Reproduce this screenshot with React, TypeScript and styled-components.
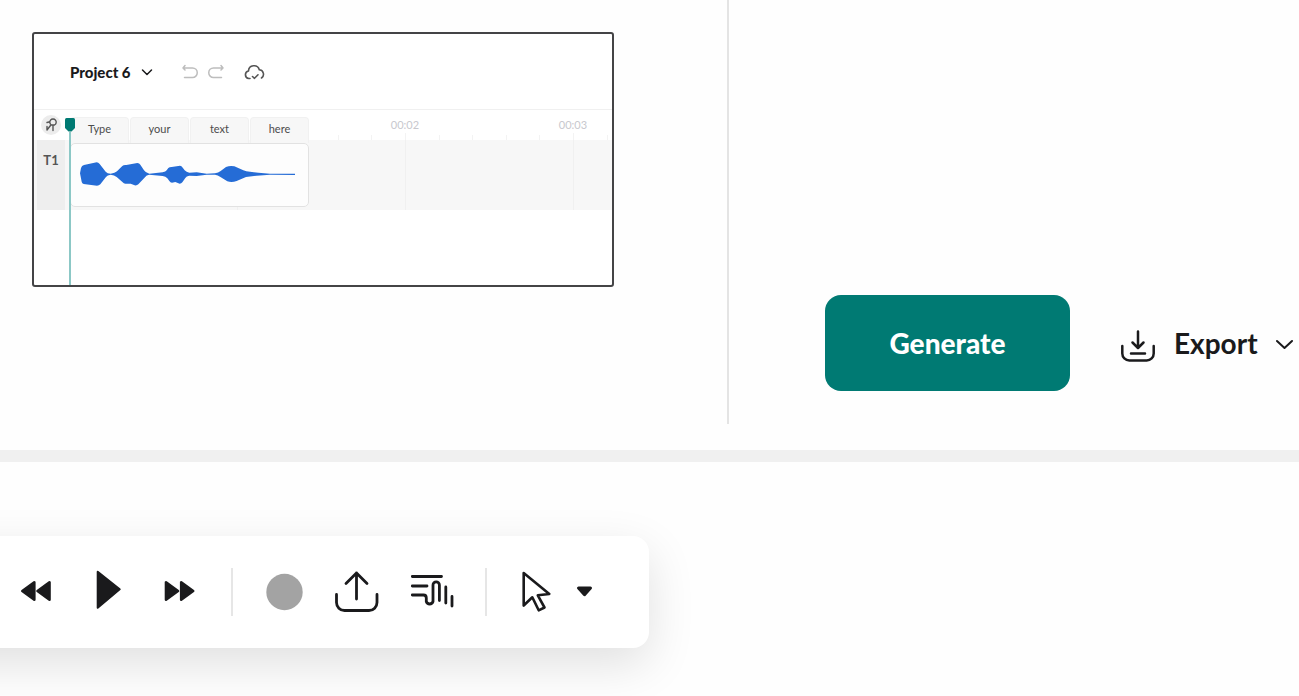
import React from "react";
import styled, { createGlobalStyle } from "styled-components";

const GlobalStyle = createGlobalStyle`
  *, *::before, *::after { box-sizing: border-box; }
  body {
    margin: 0;
    background: #fefefe;
    color: #1a1a1c;
    font-family: Lato, "Open Sans", "Liberation Sans", sans-serif;
  }
  button {
    border: 0;
    padding: 0;
    background: none;
    color: inherit;
    font: inherit;
    cursor: pointer;
  }
  svg { display: block; flex: none; }
`;

const Page = styled.div`
  display: flex;
  flex-direction: column;
  min-height: 100vh;
  overflow: hidden;
`;

const Workspace = styled.section`
  display: flex;
  min-height: 462px;
  padding-bottom: 26px;
  border-bottom: 12px solid #f0f0f0;
`;

const PreviewPane = styled.div`
  flex: 1;
  min-width: 0;
  padding: 32px;
`;

const ActionPane = styled.div`
  display: flex;
  flex: none;
  align-items: flex-end;
  gap: 50px;
  width: 572px;
  padding: 0 0 33px 96px;
  border-left: 2px solid #e4e4e4;
`;

const GenerateButton = styled.button`
  min-width: 245px;
  height: 96px;
  border-radius: 16px;
  background: #007a73;
  color: #fff;
  font-size: 28px;
  font-weight: 900;
`;

const ExportButton = styled.button`
  display: flex;
  align-items: center;
  gap: 18px;
  height: 96px;
  font-size: 28px;
  font-weight: 700;
`;

const Frame = styled.div`
  max-width: 582px;
  border: 2px solid #444446;
  border-radius: 3px;
  background: #fff;
  overflow: hidden;
`;

const ProjectBar = styled.header`
  display: flex;
  align-items: center;
  height: 76px;
  padding-left: 36px;
  border-bottom: 1px solid #f0f0f0;
`;

const ProjectName = styled.button`
  display: flex;
  align-items: center;
  gap: 10px;
  margin-right: 29px;
  font-size: 15px;
  font-weight: 900;
`;

const SmallIconButton = styled.button<{ $muted?: boolean }>`
  margin-right: ${(p) => (p.$muted ? "10px" : "0")};
  color: ${(p) => (p.$muted ? "#bdbdbd" : "#555")};
  &:last-child { margin-left: 10px; }
`;

const Timeline = styled.div`
  position: relative;
  height: 175px;
`;

const TimeRow = styled.div<{ $track?: boolean }>`
  display: flex;
  height: ${(p) => (p.$track ? "70px" : "30px")};
  background: ${(p) => (p.$track ? "#f7f7f7" : "#fff")};
`;

const RowHead = styled.div<{ $filled?: boolean }>`
  display: flex;
  flex: none;
  justify-content: center;
  width: 28px;
  margin-left: 3px;
  padding-top: ${(p) => (p.$filled ? "10px" : "5px")};
  background: ${(p) => (p.$filled ? "#eeeeee" : "transparent")};
  color: #555;
  font-size: 13px;
  font-weight: 700;
  line-height: 20px;
`;

const PinButton = styled.button`
  display: grid;
  place-items: center;
  width: 20px;
  height: 20px;
  border-radius: 50%;
  background: #ececec;
  color: #555;
`;

const Seconds = styled.div`
  display: flex;
  flex: 1;
  min-width: 0;
  padding-left: 4px;
  overflow: hidden;
`;

const Second = styled.div<{ $track?: boolean }>`
  position: relative;
  display: flex;
  flex: none;
  align-items: flex-end;
  width: 168px;
  border-left: ${(p) => (p.$track ? "1px solid #f0f0f0" : "0")};
`;

const Tick = styled.span<{ $major?: boolean }>`
  flex: 1;
  height: ${(p) => (p.$major ? "7px" : "5px")};
  border-left: 1px solid #f3f3f3;
`;

const TimeLabel = styled.span`
  position: absolute;
  top: 7px;
  left: -28px;
  width: 56px;
  color: #c8c8ce;
  font-size: 11px;
  line-height: 16px;
  text-align: center;
`;

const Clip = styled.div`
  position: absolute;
  top: 7px;
  left: 36px;
  width: 239px;
`;

const Words = styled.div`
  display: flex;
  gap: 1px;
`;

const Word = styled.span`
  flex: 1;
  height: 26px;
  border: 1px solid #f1f1f1;
  border-bottom: 0;
  border-radius: 4px 4px 0 0;
  background: #f7f7f7;
  color: #4c4c4c;
  font-size: 11px;
  line-height: 22px;
  text-align: center;
`;

const ClipBody = styled.div`
  display: flex;
  align-items: center;
  height: 64px;
  padding: 0 0 2px 9px;
  border: 1px solid #e2e2e2;
  border-radius: 5px;
  background: #fdfdfd;
`;

const Playhead = styled.div`
  position: absolute;
  top: 8px;
  bottom: 0;
  left: 31px;
  display: flex;
  flex-direction: column;
  align-items: center;
  width: 10px;
  &::after {
    content: "";
    flex: 1;
    width: 2px;
    background: #8cc8c6;
  }
`;

const ToolbarArea = styled.section`
  flex: 1;
  padding: 74px 0 48px;
`;

/* The bar runs out past the left edge of the window, so that its shadow does too. */
const Toolbar = styled.div`
  display: flex;
  align-items: center;
  width: max-content;
  height: 112px;
  margin-left: -80px;
  padding: 0 49px 0 80px;
  border-radius: 16px;
  background: #fff;
  box-shadow: 0 16px 48px rgba(0, 0, 0, 0.12);
`;

const ToolButton = styled.button<{ $width?: number }>`
  display: flex;
  align-items: center;
  justify-content: center;
  width: ${(p) => p.$width ?? 72}px;
  height: 72px;
`;

const Divider = styled.span`
  width: 2px;
  height: 48px;
  margin: 0 15px;
  background: #e6e6e6;
`;

type IconProps = {
  w: number;
  h: number;
  stroke?: number;
  solid?: boolean;
  children: React.ReactNode;
};

const Icon = ({ w, h, stroke = 2, solid, children }: IconProps) => (
  <svg
    width={w}
    height={h}
    viewBox={`0 0 ${w} ${h}`}
    fill={solid ? "currentColor" : "none"}
    stroke="currentColor"
    strokeWidth={stroke}
    strokeLinecap="round"
    strokeLinejoin="round"
    aria-hidden="true"
  >
    {children}
  </svg>
);

const Waveform = () => (
  <svg width="217" height="24" viewBox="170 186 651 72" fill="#256cd6" role="img" aria-label="Waveform">
    <path d="M170 220 L173 204 Q175 196 182 195 L220 187 Q225 187 229 192 L247 215 Q252 221 262 221 Q275 220 281 214 L297 198 Q301 194 309 195 L342 189 Q348 189 351 194 L362 211 Q367 219 378 221 L418 217 Q427 215 430 211 L435 204 Q438 201 445 201 L470 197 Q475 197 477 202 L484 211 Q489 217 498 218 L520 217 L550 221 L575 220 Q585 219 592 213 L608 201 Q620 196 633 199 L660 211 Q668 215 680 215 L705 218 L740 221 L815 221 V225 L740 224 L700 227 L668 231 L640 243 Q625 249 612 244 L590 230 Q584 225 575 224 L550 224 L520 228 L498 227 Q489 228 486 234 L477 247 Q474 251 469 251 L456 246 L446 248 Q441 248 438 243 L432 235 Q427 229 418 228 L378 224 Q369 225 365 232 L345 253 Q341 257 334 256 L322 251 L306 251 Q301 251 298 247 L280 231 Q273 225 262 224 Q252 225 248 231 L231 253 Q227 257 221 257 L181 252 Q176 251 175 245 Z" />
  </svg>
);

export default function App() {
  return (
    <>
      <GlobalStyle />
      <Page>
        <Workspace>
          <PreviewPane>
            <Frame>
              <ProjectBar>
                <ProjectName>
                  Project 6
                  <Icon w={12} h={8} stroke={1.5}>
                    <path d="M1.500 2 L6 6.500 L10.500 2" />
                  </Icon>
                </ProjectName>
                <SmallIconButton $muted aria-label="Undo">
                  <Icon w={16} h={16} stroke={1.5}>
                    <path d="M3 1.500 L1 4 L3 6 M1 4 H10.500 A4.700 4.700 0 0 1 10.500 13.500 H2.500" />
                  </Icon>
                </SmallIconButton>
                <SmallIconButton $muted aria-label="Redo">
                  <Icon w={16} h={16} stroke={1.5}>
                    <path d="M13 1.500 L15 4 L13 6 M15 4 H5.500 A4.700 4.700 0 0 0 5.500 13.500 H13.500" />
                  </Icon>
                </SmallIconButton>
                <SmallIconButton aria-label="Saved to cloud">
                  <Icon w={21} h={16} stroke={1.6}>
                    <path d="M6 14.500 H4.800 A3.800 3.800 0 0 1 4.500 7 A5.500 5.500 0 0 1 15.300 5.800 A4.500 4.500 0 0 1 17.500 14 M8.500 12.500 L10.500 14.300 L14 10.800" />
                  </Icon>
                </SmallIconButton>
              </ProjectBar>
              <Timeline>
                <TimeRow>
                  <RowHead>
                    <PinButton aria-label="Pin playhead">
                      <Icon w={14} h={16} stroke={1.4}>
                        <path d="M7.500 8 A3.200 3.200 0 1 1 10.500 8 M7.500 8 H10.500 M9 8 V13.500 M5 5 L3 5.500 M6.500 8.500 L3 13 V9.500" />
                      </Icon>
                    </PinButton>
                  </RowHead>
                  <Seconds>
                    {[0, 1, 2, 3].map((second) => (
                      <Second key={second}>
                        {second > 1 && <TimeLabel>{`00:0${second}`}</TimeLabel>}
                        <Tick $major />
                        <Tick />
                        <Tick />
                        <Tick />
                        <Tick />
                      </Second>
                    ))}
                  </Seconds>
                </TimeRow>
                <TimeRow $track>
                  <RowHead $filled>T1</RowHead>
                  <Seconds>
                    <Second $track />
                    <Second $track />
                    <Second $track />
                    <Second $track />
                  </Seconds>
                </TimeRow>
                <Clip>
                  <Words>
                    {["Type", "your", "text", "here"].map((word) => (
                      <Word key={word}>{word}</Word>
                    ))}
                  </Words>
                  <ClipBody>
                    <Waveform />
                  </ClipBody>
                </Clip>
                <Playhead>
                  <svg width="10" height="14" viewBox="0 0 10 14" fill="#007a73" aria-hidden="true">
                    <path d="M1.500 0 H8.500 Q10 0 10 1.500 V10 L6.500 13.500 H3.500 L0 10 V1.500 Q0 0 1.500 0 Z" />
                  </svg>
                </Playhead>
              </Timeline>
            </Frame>
          </PreviewPane>
          <ActionPane>
            <GenerateButton>Generate</GenerateButton>
            <ExportButton>
              <Icon w={36} h={40} stroke={2.5}>
                <path d="M2.300 23 V30.500 A7 7 0 0 0 9.300 37.500 H26.700 A7 7 0 0 0 33.700 30.500 V23 M11 30.500 H25 M18 8.500 V24 M12.500 19.500 L18 25 L23.500 19.500" />
              </Icon>
              Export
              <Icon w={18} h={12} stroke={2}>
                <path d="M1 4 L8.500 11 L16 4" />
              </Icon>
            </ExportButton>
          </ActionPane>
        </Workspace>
        <ToolbarArea>
          <Toolbar role="toolbar" aria-label="Playback and editing">
            <ToolButton aria-label="Rewind">
              <Icon w={48} h={48} stroke={2.6} solid>
                <path d="M10.300 23 L22.300 14.300 V31.700 Z M25.500 23 L37.500 14.300 V31.700 Z" />
              </Icon>
            </ToolButton>
            <ToolButton aria-label="Play">
              <Icon w={48} h={48} solid>
                <path d="M13.700 3.700 L35.700 21.300 L13.700 39.800 Z" />
              </Icon>
            </ToolButton>
            <ToolButton aria-label="Fast forward">
              <Icon w={48} h={48} stroke={2.6} solid>
                <path d="M10 14.300 V31.700 L22 23 Z M25.200 14.300 V31.700 L37.200 23 Z" />
              </Icon>
            </ToolButton>
            <Divider />
            <ToolButton aria-label="Record">
              <svg width="48" height="48" viewBox="0 0 48 48" aria-hidden="true">
                <circle cx="24.500" cy="24" r="18.200" fill="#a3a3a3" />
              </svg>
            </ToolButton>
            <ToolButton aria-label="Upload">
              <Icon w={48} h={48} stroke={2.8}>
                <path d="M4.500 26.500 V34.500 A8 8 0 0 0 12.500 42.500 H37 A8 8 0 0 0 45 34.500 V26.500 M24.500 31 V5 M14 15.500 L24.500 5 L35 15.500" />
              </Icon>
            </ToolButton>
            <ToolButton aria-label="Transcribe" $width={78}>
              <Icon w={48} h={48} stroke={2.8}>
                <path d="M5.300 8.500 H34.500 M5.300 18 H20 M5.300 27 H16.500 Q19.300 27 19.300 30 V33.500 A3.500 3.500 0 0 0 26 33.500 V17 A3.200 3.200 0 0 1 32.400 17 V32.500 M38.800 19 V35 M45 28.500 V38" />
              </Icon>
            </ToolButton>
            <Divider />
            <ToolButton aria-label="Select" $width={68}>
              <Icon w={48} h={48} stroke={2.6}>
                <path d="M11.700 5 L37.300 26 L25.800 27.300 L32.500 39.500 L26.700 42.300 L20.300 29.300 L11.700 37.500 Z" />
              </Icon>
            </ToolButton>
            <ToolButton aria-label="More selection tools" $width={30}>
              <Icon w={18} h={12} stroke={3} solid>
                <path d="M2.500 2 H14.500 L8.500 8.700 Z" />
              </Icon>
            </ToolButton>
          </Toolbar>
        </ToolbarArea>
      </Page>
    </>
  );
}
